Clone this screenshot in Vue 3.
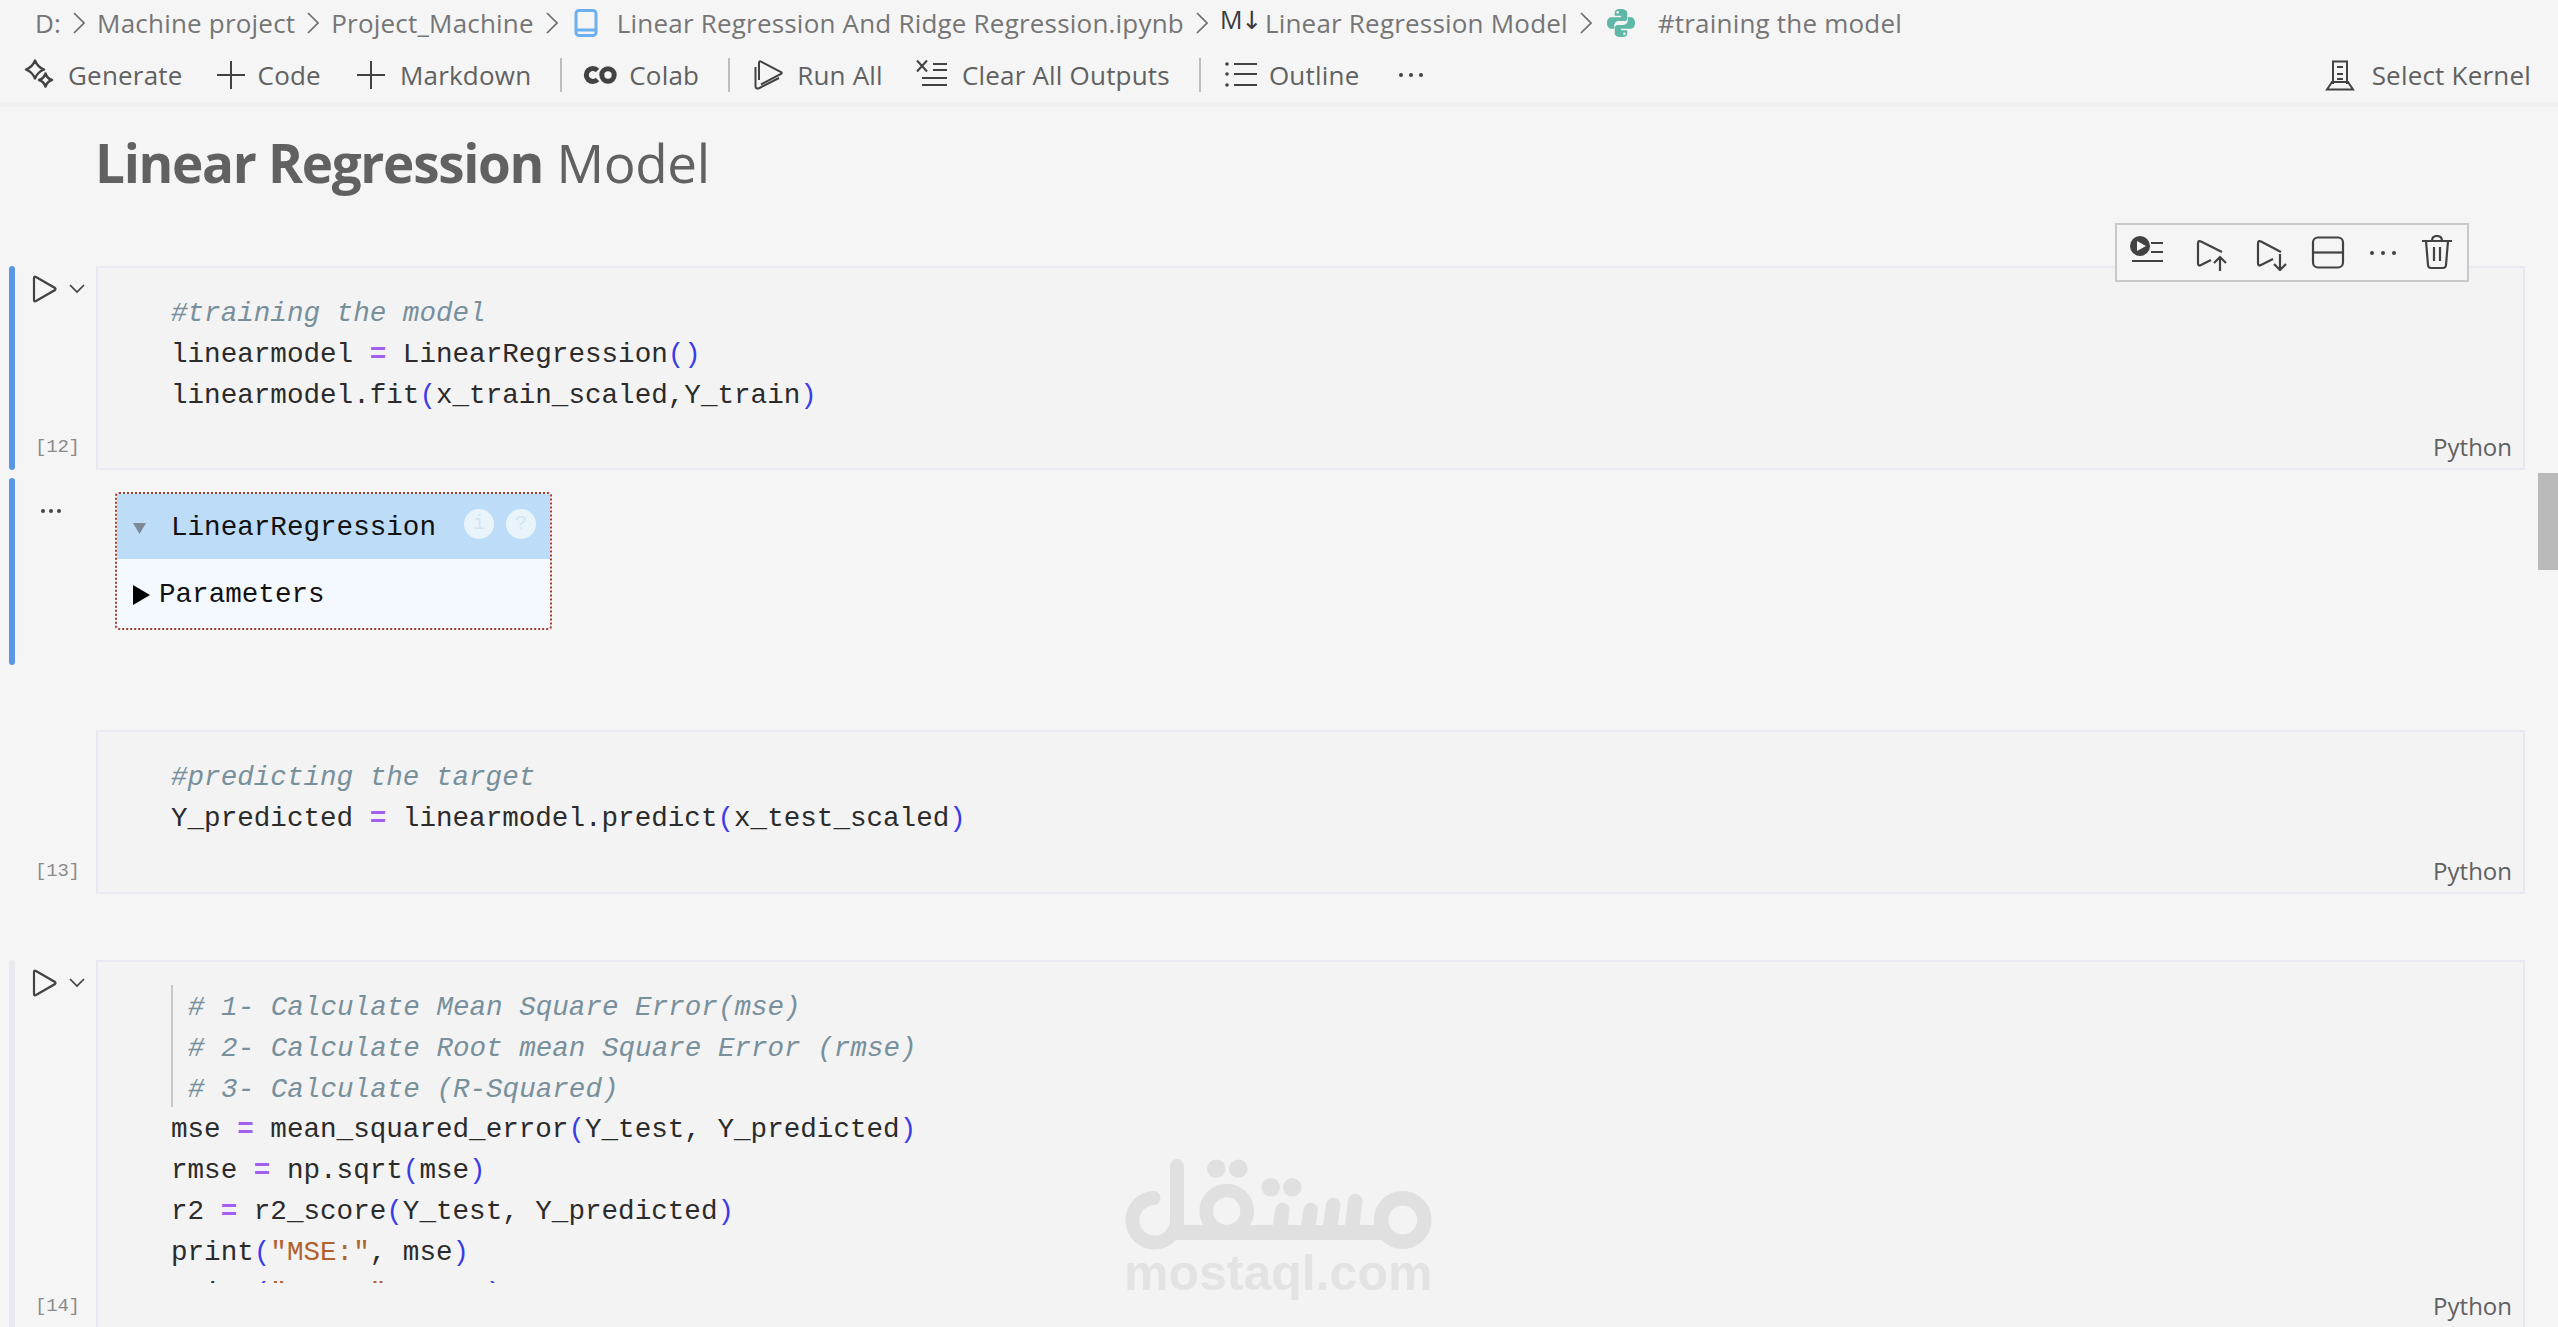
<script setup>
const crumbPaths = ['D:', 'Machine project', 'Project_Machine']
</script>

<template>
  <div class="page">
    <header class="head">
      <nav class="crumbs">
        <template v-for="c in crumbPaths" :key="c">
          <span class="crumb">{{ c }}</span>
          <svg class="chev" width="12" height="22" viewBox="0 0 12 22"><path d="M1 1l10 10L1 21" /></svg>
        </template>
        <svg class="nb" width="24" height="28" viewBox="0 0 24 28"><rect x="2" y="1.5" width="20" height="25" rx="3" /><path d="M2 21h20" /></svg>
        <span class="crumb file">Linear Regression And Ridge Regression.ipynb</span>
        <svg class="chev" width="12" height="22" viewBox="0 0 12 22"><path d="M1 1l10 10L1 21" /></svg>
        <span class="md">M↓</span>
        <span class="crumb">Linear Regression Model</span>
        <svg class="chev" width="12" height="22" viewBox="0 0 12 22"><path d="M1 1l10 10L1 21" /></svg>
        <svg class="py" width="30" height="30" viewBox="0 0 31 31">
          <path d="M15 1C10 1 9 3 9 5v3h6.500v1.500H6C3 9.500 1 11.500 1 15.500s2 6 5 6h2.500V18c0-2.500 2-4.500 4.500-4.500h6c2 0 3-1.500 3-3.500V5c0-2-2-4-7-4z" />
          <path transform="rotate(180 15.500 15.500)" d="M15 1C10 1 9 3 9 5v3h6.500v1.500H6C3 9.500 1 11.500 1 15.500s2 6 5 6h2.500V18c0-2.500 2-4.500 4.500-4.500h6c2 0 3-1.500 3-3.500V5c0-2-2-4-7-4z" />
          <circle class="eye" cx="12" cy="4.500" r="1.300" /><circle class="eye" cx="19" cy="26.500" r="1.300" />
        </svg>
        <span class="crumb sym">#training the model</span>
      </nav>
      <div class="toolbar">
        <button class="tool t-gen">
          <svg width="32" height="32" viewBox="0 0 32 32"><path class="star" d="M11 1.500Q13.500 8 20 10.500 13.500 13 11 19.500 8.500 13 2 10.500 8.500 8 11 1.500zM21.500 14.500Q23.200 19.500 28 21 23.200 22.500 21.500 27.500 19.800 22.500 15 21 19.800 19.500 21.500 14.500z" /></svg>
          <span>Generate</span>
        </button>
        <button class="tool t-code">
          <svg width="30" height="30" viewBox="0 0 30 30"><path d="M15 1v28M1 15h28" /></svg>
          <span>Code</span>
        </button>
        <button class="tool t-md">
          <svg width="30" height="30" viewBox="0 0 30 30"><path d="M15 1v28M1 15h28" /></svg>
          <span>Markdown</span>
        </button>
        <i class="sep"></i>
        <button class="tool t-colab">
          <svg width="34" height="24" viewBox="0 0 34 24"><path class="thick" d="M14.500 7.500a6.500 6.500 0 1 0 0 9" /><circle class="thick" cx="25" cy="12" r="6.200" /></svg>
          <span>Colab</span>
        </button>
        <i class="sep"></i>
        <button class="tool t-run">
          <svg width="32" height="32" viewBox="0 0 32 32"><path d="M6 21V4q0-2.500 2.500-1.200L28 13q1.500 1 0 2L8 25.500M2.500 8v19q0 3.500 4 2L26 19" /></svg>
          <span>Run All</span>
        </button>
        <button class="tool t-clear">
          <svg width="32" height="32" viewBox="0 0 32 32"><path d="M1 1.500l10 11M11 1.500l-10 11M17 5h14M17 11h14M6 19h25M6 26h25" /></svg>
          <span>Clear All Outputs</span>
        </button>
        <i class="sep"></i>
        <button class="tool t-outline">
          <svg width="32" height="32" viewBox="0 0 32 32"><path d="M9 5h23M9 15h23M9 26h23" /><circle class="dot" cx="2" cy="5" r="1.800" /><circle class="dot" cx="2" cy="15" r="1.800" /><circle class="dot" cx="2" cy="26" r="1.800" /></svg>
          <span>Outline</span>
        </button>
        <svg class="more" width="26" height="8" viewBox="0 0 26 8"><circle cx="3" cy="4" r="2" /><circle cx="13" cy="4" r="2" /><circle cx="23" cy="4" r="2" /></svg>
        <button class="tool kernel">
          <svg width="30" height="32" viewBox="0 0 30 32"><path d="M8 25V2.500h14V25M12 8h6M12 15h6M12 20h6M7 23L2 30.500h26L23 23z" /></svg>
          <span>Select Kernel</span>
        </button>
      </div>
    </header>

    <h1 class="title"><b>Linear Regression</b> Model</h1>

    <section class="cell c1">
      <i class="bar active"></i>
      <div class="gutter">
        <div class="run">
          <svg width="26" height="28" viewBox="0 0 26 28"><path d="M2 3q0-2 2-1l19 11q1 1 0 2L4 26q-2 1-2-1z" /></svg>
          <svg class="drop" width="16" height="10" viewBox="0 0 16 10"><path d="M1 1l7 7 7-7" /></svg>
        </div>
        <span class="count">[12]</span>
      </div>
      <div class="box">
        <div class="code">
          <div class="line cm">#training the model</div>
          <div class="line">linearmodel <b class="op">=</b> LinearRegression<span class="br">()</span></div>
          <div class="line">linearmodel.fit<span class="br">(</span>x_train_scaled,Y_train<span class="br">)</span></div>
        </div>
        <div class="lang">Python</div>
      </div>
      <div class="celltools">
        <svg viewBox="0 4 36 36"><circle class="solid" cx="11" cy="15" r="10" /><path class="inv" d="M8 10l9 5-9 5z" /><path d="M22 12h12M22 21h12M3 30h31" /></svg>
        <svg viewBox="0 -2 36 36"><path d="M28 15L7 4.500Q4 3 4 6.500V26q0 3.500 3 2l10-5M26 34V21M20 26l6-6 6 6" /></svg>
        <svg viewBox="0 -2 36 36"><path d="M27 15L7 4.500Q4 3 4 6.500V26q0 3.500 3 2l12-6M26 17v16M20 27l6 6 6-6" /></svg>
        <svg viewBox="0 0 36 36"><rect x="3" y="2.500" width="30" height="30" rx="5" /><path d="M3 17.500h30" /></svg>
        <svg viewBox="0 0 36 36"><circle class="solid" cx="7" cy="18" r="2" /><circle class="solid" cx="18" cy="18" r="2" /><circle class="solid" cx="29" cy="18" r="2" /></svg>
        <svg viewBox="0 0 36 36"><path d="M3 6h30M13 6q0-5 5-5t5 5M7 6l2 24q.3 3 3 3h12q2.700 0 3-3l2-24M15 12v14M21 12v14" /></svg>
      </div>
    </section>

    <section class="output">
      <i class="bar active"></i>
      <div class="gutter">
        <svg class="outdots" width="22" height="6" viewBox="0 0 22 6"><circle cx="3" cy="3" r="2" /><circle cx="11" cy="3" r="2" /><circle cx="19" cy="3" r="2" /></svg>
      </div>
      <div class="estimator">
        <div class="est-head">
          <svg class="tri-d" width="13" height="11" viewBox="0 0 13 11"><path d="M0 0h13L6.500 11z" /></svg>
          <span class="est-name">LinearRegression</span>
          <span class="circ"><span>i</span></span>
          <span class="circ"><span>?</span></span>
        </div>
        <div class="est-body">
          <span class="tri-r"></span>
          <span>Parameters</span>
        </div>
      </div>
    </section>

    <section class="cell c2">
      <i class="bar"></i>
      <div class="gutter end">
        <span class="count">[13]</span>
      </div>
      <div class="box">
        <div class="code">
          <div class="line cm">#predicting the target</div>
          <div class="line">Y_predicted <b class="op">=</b> linearmodel.predict<span class="br">(</span>x_test_scaled<span class="br">)</span></div>
        </div>
        <div class="lang">Python</div>
      </div>
    </section>

    <section class="cell c3">
      <i class="bar idle"></i>
      <div class="gutter">
        <div class="run">
          <svg width="26" height="28" viewBox="0 0 26 28"><path d="M2 3q0-2 2-1l19 11q1 1 0 2L4 26q-2 1-2-1z" /></svg>
          <svg class="drop" width="16" height="10" viewBox="0 0 16 10"><path d="M1 1l7 7 7-7" /></svg>
        </div>
        <span class="count">[14]</span>
      </div>
      <div class="box">
        <div class="code">
          <div class="guide">
            <div class="line cm"># 1- Calculate Mean Square Error(mse)</div>
            <div class="line cm"># 2- Calculate Root mean Square Error (rmse)</div>
            <div class="line cm"># 3- Calculate (R-Squared)</div>
          </div>
          <div class="line">mse <b class="op">=</b> mean_squared_error<span class="br">(</span>Y_test, Y_predicted<span class="br">)</span></div>
          <div class="line">rmse <b class="op">=</b> np.sqrt<span class="br">(</span>mse<span class="br">)</span></div>
          <div class="line">r2 <b class="op">=</b> r2_score<span class="br">(</span>Y_test, Y_predicted<span class="br">)</span></div>
          <div class="line">print<span class="br">(</span><span class="str">"MSE:"</span>, mse<span class="br">)</span></div>
          <div class="line">print<span class="br">(</span><span class="str">"RMSE:"</span>, rmse<span class="br">)</span></div>
        </div>
        <div class="lang">Python</div>
      </div>
    </section>

    <div class="scroll"></div>

    <svg class="mark" width="500" height="227" viewBox="0 0 500 227">
      <g fill="none" stroke="#e0e0e0" stroke-linecap="round">
        <path stroke-width="14" d="M103.500 98A22.300 22.300 0 1 0 127 120V66" />
        <path stroke-width="15" stroke-linecap="butt" d="M124 132.500H334" />
        <circle stroke-width="13.700" cx="176.700" cy="111" r="20.500" />
        <circle stroke-width="14.500" cx="352.700" cy="120" r="21.700" />
        <path stroke-width="14.500" d="M230 127l2.300-17M258 127l2.700-17M280 127l3.300-22M302 127l3.300-26" />
      </g>
      <g fill="#e0e0e0">
        <circle cx="166.300" cy="68.700" r="9.300" />
        <circle cx="188.300" cy="68.700" r="9.300" />
        <circle cx="220.700" cy="87.300" r="9.300" />
        <circle cx="242.300" cy="87.300" r="9.300" />
      </g>
      <text x="74" y="190" class="mark-text">mostaql.com</text>
    </svg>
  </div>
</template>

<style>
html, body { margin: 0; background: #f5f5f5; }
</style>

<style scoped>
.page {
  position: relative;
  height: 1327px;
  overflow: hidden;
  background: #f5f5f5;
  font-family: "Open Sans", "Noto Sans", sans-serif;
  color: #616161;
}
.head { height: 102px; border-bottom: 5px solid #efefef; }
.crumbs {
  height: 47px;
  box-sizing: border-box;
  padding: 0 0 2px 35px;
  display: flex;
  align-items: center;
  font-size: 26px;
  letter-spacing: 0.2px;
  color: #757575;
  white-space: nowrap;
}
.crumb { display: block; }
.chev { margin: 0 12px; flex: none; }
.chev path { fill: none; stroke: #6e6e6e; stroke-width: 1.700; }
.nb { margin: 0 19px 0 4px; flex: none; }
.nb rect, .nb path { fill: none; stroke: #6cb0f0; stroke-width: 3; }
.md { font-size: 25px; font-family: "Open Sans", "DejaVu Sans", sans-serif; color: #3a3a3a; letter-spacing: -1px; width: 45px; margin-top: -8px; }
.py { margin: 0 22px 0 2px; flex: none; }
.py path { fill: #5fb8a7; }
.py .eye { fill: #f5f5f5; }

.toolbar { height: 55px; display: flex; align-items: center; padding-left: 24px; }
.tool {
  display: flex;
  align-items: center;
  gap: 12px;
  padding: 0;
  border: 0;
  background: none;
  font: inherit;
  font-size: 26px;
  letter-spacing: 0.2px;
  color: #616161;
  white-space: nowrap;
}
.tool svg { flex: none; fill: none; stroke: #424242; stroke-width: 2; }
.tool svg .dot { fill: #424242; stroke: none; }
.tool svg .star { stroke-width: 2.400; stroke-linejoin: round; }
.tool svg .thick { stroke-width: 5; }
.t-code { margin-left: 33px; }
.t-md { margin-left: 35px; gap: 14px; }
.t-colab { margin-left: 21px; }
.t-run { margin-left: 23px; }
.t-clear { margin-left: 33px; gap: 14px; }
.t-outline { margin-left: 24px; }
.sep { width: 2px; height: 34px; background: #bdbdbd; margin-left: 29px; }
.more { margin-left: 39px; fill: #424242; }
.kernel { margin-left: auto; margin-right: 27px; gap: 17px; }

.title {
  margin: 0;
  height: 159px;
  box-sizing: border-box;
  padding: 20px 0 0 95px;
  font-size: 53px;
  line-height: 72px;
  font-weight: 400;
  letter-spacing: -0.400px;
  color: #616161;
}
.title b { font-weight: 700; letter-spacing: -1.300px; }

.cell, .output { position: relative; display: flex; margin-right: 33px; }
.c1 { height: 204px; }
.c2 { height: 164px; margin-top: 65px; }
.c3 { height: 369px; margin-top: 66px; }
.output { height: 187px; margin-top: 8px; }

.bar { flex: none; width: 6px; margin-left: 9px; border-radius: 3px; background: transparent; }
.bar.active { background: #5a97e6; }
.bar.idle { background: #e9e9f1; }

.gutter {
  flex: none;
  width: 81px;
  box-sizing: border-box;
  padding: 9px 0 11px 20px;
  display: flex;
  flex-direction: column;
  justify-content: space-between;
}
.gutter.end { justify-content: flex-end; }
.run { display: flex; align-items: center; margin-left: -3px; }
.run svg { fill: none; stroke: #424242; stroke-width: 2.200; flex: none; }
.drop { margin-left: 11px; stroke-width: 1.700 !important; }
.count { font: 19px/24px "Liberation Mono", monospace; letter-spacing: -0.2px; color: #8a8a8a; }

.box {
  flex: 1;
  min-width: 0;
  display: flex;
  flex-direction: column;
  background: #f3f3f3;
  border: 2px solid #e8e8f2;
}
.code {
  flex: 1;
  min-height: 0;
  overflow: hidden;
  padding: 23px 0 0 73px;
  font: 27.600px/46px "Liberation Mono", monospace;
  color: #2b2b2b;
}
.line { height: 40.800px; white-space: pre; }
.cm { font-style: italic; color: #78909c; }
.op { color: #a35ff0; font-weight: 700; }
.br { color: #3b3be8; }
.str { color: #b0622e; }
.guide { border-left: 2px solid #c8c8c8; padding-left: 15px; }
.lang {
  flex: none;
  height: 44px;
  line-height: 46px;
  text-align: right;
  padding-right: 11px;
  font-size: 24px;
  letter-spacing: 0;
  color: #616161;
}

.celltools {
  position: absolute;
  top: -43px;
  right: 56px;
  width: 350px;
  height: 55px;
  display: grid;
  grid-template-columns: 59px 72px 48px 64px 46px 61px;
  justify-items: center;
  align-items: center;
  background: #f5f5f5;
  border: 2px solid #c8c8c8;
}
.celltools svg { width: 36px; height: 36px; fill: none; stroke: #424242; stroke-width: 2.200; }
.celltools .solid { fill: #424242; stroke: none; }
.celltools .inv { fill: #f5f5f5; stroke: none; }

.outdots { fill: #424242; margin: 21px 0 0 5px; }
.estimator {
  align-self: flex-start;
  margin: 14px 0 0 19px;
  width: 437px;
  height: 138px;
  box-sizing: border-box;
  border: 2px dotted #a83a2a;
  border-radius: 4px;
  font: 27.600px/1 "Liberation Mono", monospace;
  color: #111;
  background: #f4f8ff;
}
.est-head {
  height: 65px;
  display: flex;
  align-items: center;
  background: #bddcf8;
  padding-left: 16px;
}
.tri-d { fill: #7d8a96; flex: none; margin: 4px 25px 0 0; }
.est-name { width: 265px; margin-right: 28px; margin-top: 2px; }
.circ {
  width: 30px;
  height: 30px;
  margin-right: 12px;
  margin-top: -5px;
  border-radius: 50%;
  background: #e9f4fa;
  display: flex;
  align-items: center;
  justify-content: center;
  font-size: 20px;
  color: #cfe8f4;
}
.est-body { height: 69px; box-sizing: border-box; padding: 2px 0 0 16px; display: flex; align-items: center; }
.tri-r {
  width: 0;
  height: 0;
  border-left: 17px solid #000;
  border-top: 10px solid transparent;
  border-bottom: 10px solid transparent;
  margin-right: 9px;
}

.scroll { position: absolute; left: 2538px; top: 473px; width: 20px; height: 97px; background: #b9b9b9; }
.mark { position: absolute; left: 1050px; top: 1100px; }
.mark-text { font: 700 50px "Liberation Sans", sans-serif; fill: #e3e3e3; }
</style>
